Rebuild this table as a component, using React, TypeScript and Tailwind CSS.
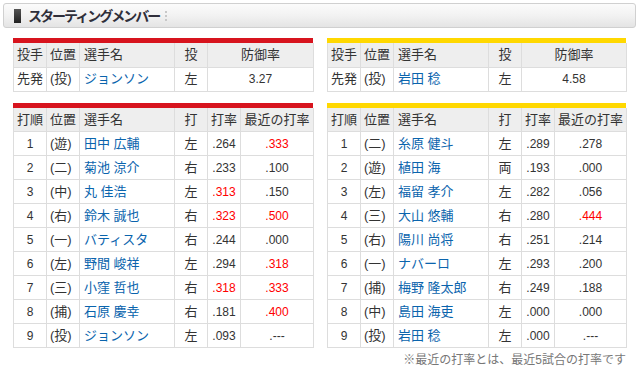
import React from "react";

const FONT = { fontFamily: '"Liberation Sans", "Noto Sans CJK JP", sans-serif' };

type Row = [string, string, string, string, string, string, boolean, boolean];

const carp: Row[] = [
  ["1", "遊", "田中 広輔", "左", ".264", ".333", false, true],
  ["2", "二", "菊池 涼介", "右", ".233", ".100", false, false],
  ["3", "中", "丸 佳浩", "左", ".313", ".150", true, false],
  ["4", "右", "鈴木 誠也", "右", ".323", ".500", true, true],
  ["5", "一", "バティスタ", "右", ".244", ".000", false, false],
  ["6", "左", "野間 峻祥", "左", ".294", ".318", false, true],
  ["7", "三", "小窪 哲也", "右", ".318", ".333", true, true],
  ["8", "捕", "石原 慶幸", "右", ".181", ".400", false, true],
  ["9", "投", "ジョンソン", "左", ".093", ".---", false, false],
];

const tigers: Row[] = [
  ["1", "二", "糸原 健斗", "左", ".289", ".278", false, false],
  ["2", "遊", "植田 海", "両", ".193", ".000", false, false],
  ["3", "左", "福留 孝介", "左", ".282", ".056", false, false],
  ["4", "三", "大山 悠輔", "右", ".280", ".444", false, true],
  ["5", "右", "陽川 尚将", "右", ".251", ".214", false, false],
  ["6", "一", "ナバーロ", "左", ".293", ".200", false, false],
  ["7", "捕", "梅野 隆太郎", "右", ".249", ".188", false, false],
  ["8", "中", "島田 海吏", "左", ".000", ".000", false, false],
  ["9", "投", "岩田 稔", "左", ".000", ".---", false, false],
];

const th = "border border-[#dddddd] bg-[#eeeeee] font-normal text-[13px] text-[#333333] h-[24px] p-0";
const cell = "border border-[#dddddd] bg-white h-[24px] p-0";
const td = `${cell} text-[13px] text-[#333333]`;
const nameTd = `${cell} text-[13px] text-[#0a64ad] pl-[4px] whitespace-nowrap`;
const numTd = `${cell} text-[12px] text-center text-[#333333]`;
const redTd = `${cell} text-[12px] text-center text-[#ff0000]`;

function PitcherTable({ color, name, era, last }: { color: string; name: string; era: string; last: number }) {
  return (
    <div className={color === "red" ? "border-t-[5px] border-[#d7141e]" : "border-t-[5px] border-[#ffd800]"}>
      <table className="table-fixed border-collapse w-full" style={FONT}>
        <colgroup>
          <col className="w-[33px]" />
          <col className="w-[33px]" />
          <col className="w-[95px]" />
          <col className="w-[33px]" />
          <col style={{ width: last }} />
        </colgroup>
        <thead>
          <tr>
            <th className={`${th} text-left pl-[3px] border-t-0`}>投手</th>
            <th className={`${th} text-left pl-[3px] border-t-0`}>位置</th>
            <th className={`${th} text-left pl-[4px] border-t-0`}>選手名</th>
            <th className={`${th} text-center border-t-0`}>投</th>
            <th className={`${th} text-center border-t-0`}>防御率</th>
          </tr>
        </thead>
        <tbody>
          <tr>
            <td className={`${td} pl-[3px]`}>先発</td>
            <td className={`${td} pl-[3px]`}>(投)</td>
            <td className={nameTd}>{name}</td>
            <td className={`${td} text-center`}>左</td>
            <td className={numTd}>{era}</td>
          </tr>
        </tbody>
      </table>
    </div>
  );
}

function LineupTable({ color, rows, last }: { color: string; rows: Row[]; last: number }) {
  return (
    <div className={color === "red" ? "border-t-[5px] border-[#d7141e]" : "border-t-[5px] border-[#ffd800]"}>
      <table className="table-fixed border-collapse w-full" style={FONT}>
        <colgroup>
          <col className="w-[33px]" />
          <col className="w-[33px]" />
          <col className="w-[95px]" />
          <col className="w-[33px]" />
          <col className="w-[33px]" />
          <col style={{ width: last }} />
        </colgroup>
        <thead>
          <tr>
            <th className={`${th} text-left pl-[3px] border-t-0`}>打順</th>
            <th className={`${th} text-left pl-[3px] border-t-0`}>位置</th>
            <th className={`${th} text-left pl-[4px] border-t-0`}>選手名</th>
            <th className={`${th} text-center border-t-0`}>打</th>
            <th className={`${th} text-center border-t-0`}>打率</th>
            <th className={`${th} text-center border-t-0 whitespace-nowrap`}>最近の打率</th>
          </tr>
        </thead>
        <tbody>
          {rows.map((r) => (
            <tr key={r[0]}>
              <td className={numTd}>{r[0]}</td>
              <td className={`${td} pl-[3px] whitespace-nowrap`}>({r[1]})</td>
              <td className={nameTd}>{r[2]}</td>
              <td className={`${td} text-center`}>{r[3]}</td>
              <td className={r[6] ? redTd : numTd}>{r[4]}</td>
              <td className={r[7] ? redTd : numTd}>{r[5]}</td>
            </tr>
          ))}
        </tbody>
      </table>
    </div>
  );
}

export default function App() {
  return (
    <div className="w-[640px] h-[373px] bg-white overflow-hidden pt-[3px]" style={FONT}>
      <div className="ml-[3px] w-[633px] h-[25px] border border-[#d0d0d0] rounded-[3px] bg-gradient-to-b from-[#fbfbfb] via-[#f2f2f2] to-[#e4e4e4] flex items-center">
        <div className="ml-[10px] w-[7px] h-[14px] bg-gradient-to-b from-[#555555] to-[#222222]" />
        <div className="ml-[7px] text-[14px] font-bold tracking-[-2px] text-[#2f2f3a] leading-none">スターティングメンバー</div>
        <div className="ml-[6px] flex flex-col gap-[2px]">
          <div className="w-[2px] h-[2px] bg-[#c8c8c8]" />
          <div className="w-[2px] h-[2px] bg-[#c8c8c8]" />
          <div className="w-[2px] h-[2px] bg-[#c8c8c8]" />
        </div>
      </div>

      <div className="mt-[10px] ml-[13px] flex gap-[14px]">
        <div className="w-[300px]">
          <PitcherTable color="red" name="ジョンソン" era="3.27" last={106} />
        </div>
        <div className="w-[299px]">
          <PitcherTable color="yellow" name="岩田 稔" era="4.58" last={105} />
        </div>
      </div>

      <div className="mt-[11px] ml-[13px] flex gap-[14px]">
        <div className="w-[300px]">
          <LineupTable color="red" rows={carp} last={73} />
        </div>
        <div className="w-[299px]">
          <LineupTable color="yellow" rows={tigers} last={72} />
        </div>
      </div>

      <div className="w-[626px] text-right text-[12px] text-[#777777] mt-[3px]">※最近の打率とは、最近5試合の打率です</div>
    </div>
  );
}
